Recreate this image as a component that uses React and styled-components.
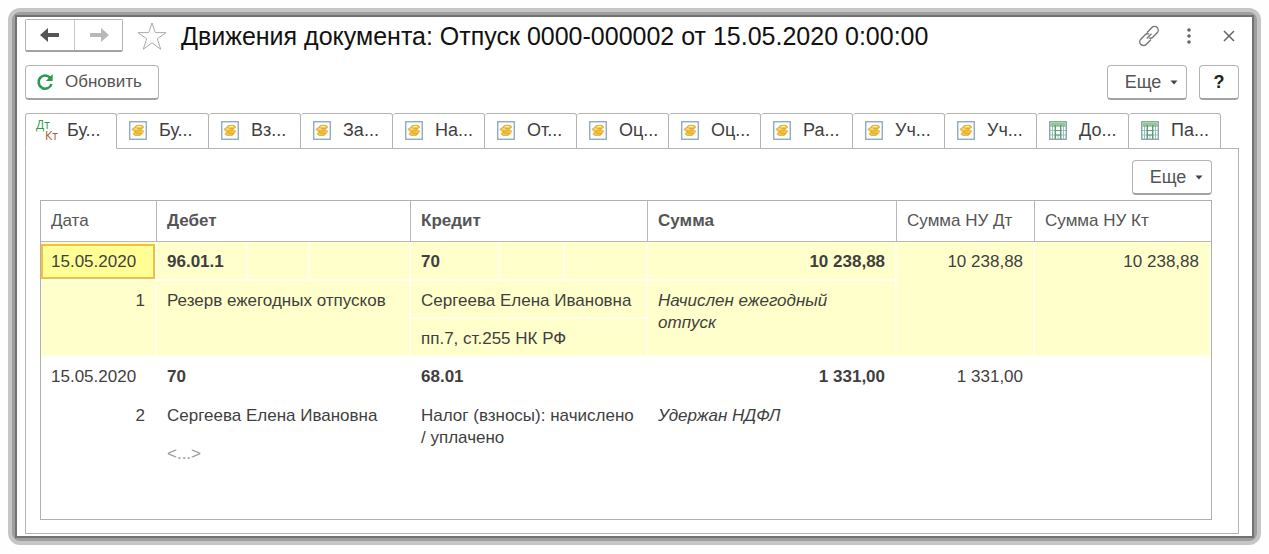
import { useState } from "react";
import styled, { createGlobalStyle, css } from "styled-components";

const GlobalStyle = createGlobalStyle`
  *, *::before, *::after {
    box-sizing: border-box;
  }

  body {
    margin: 0;
    background: #fefefe;
    color: #3f3f3f;
    font: 17px/22px "Liberation Sans", Arial, sans-serif;
  }

  button {
    font: inherit;
    color: inherit;
    margin: 0;
    cursor: pointer;
  }
`;

// Window frame
const Page = styled.div`
  display: flex;
  min-height: 100vh;
  padding: 8px 8px 9px;
`;

const Frame = styled.div`
  display: flex;
  flex: 1;
  min-width: 0;
  padding: 3px;
  border: 4px solid #c6c6c6;
  border-radius: 12px;
  background: #9e9e9e;
`;

const Window = styled.main`
  display: flex;
  flex-direction: column;
  flex: 1;
  min-width: 0;
  padding: 0 13px 2px 8px;
  border: 2px solid #727272;
  background: #fff;
`;

const TitleBar = styled.header`
  display: flex;
  align-items: center;
  height: 37px;
`;

const NavGroup = styled.div`
  display: flex;
  height: 33px;
  border: 1px solid #b4b4b4;
  border-bottom: 2px solid #a2a2a2;
  border-radius: 2px;
`;

const NavButton = styled.button`
  display: flex;
  align-items: center;
  justify-content: center;
  width: 48px;
  padding: 0;
  border: 0;
  background: #fff;

  & + & {
    border-left: 1px solid #c8c8c8;
  }
`;

const IconButton = styled.button`
  display: flex;
  align-items: center;
  justify-content: center;
  width: ${({ $width }) => $width || 24}px;
  padding: 0;
  border: 0;
  background: none;
`;

const Title = styled.h1`
  flex: 1;
  margin: 0;
  color: #111;
  font-size: 25px;
  line-height: 32px;
  font-weight: 400;
  white-space: nowrap;
`;

const WindowTools = styled.div`
  display: flex;
  align-items: center;
  gap: 16px;
  margin-right: -2px;
`;

const Toolbar = styled.div`
  display: flex;
  gap: 12px;
  margin: 11px 0 13px;
`;

const Spacer = styled.div`
  flex: 1;
`;

const Button = styled.button`
  display: flex;
  align-items: center;
  justify-content: center;
  gap: 11px;
  height: 35px;
  padding: 0 16px 0 10px;
  border: 1px solid #b4b4b4;
  border-bottom: 2px solid #a2a2a2;
  border-radius: 4px;
  background: #fff;
  color: #555;
`;

const MenuButton = styled(Button)`
  gap: 9px;
  width: 80px;
  padding: 0 7px 0 16px;
  font-size: 18px;
`;

const HelpButton = styled(Button)`
  width: 40px;
  padding: 0;
  color: #222;
  font-size: 18px;
  font-weight: 700;
`;

// Tabs
const TabList = styled.div`
  display: flex;
`;

const Tab = styled.button`
  display: flex;
  align-items: center;
  gap: ${({ $compact }) => ($compact ? 9 : 12)}px;
  flex: 0 1 92px;
  min-width: 0;
  height: 36px;
  padding: 0 0 2px ${({ $compact }) => ($compact ? 10 : 12)}px;
  border: 1px solid #b4b4b4;
  border-bottom-color: ${({ $active }) => ($active ? "#fff" : "#b4b4b4")};
  border-left-width: ${({ $first }) => ($first ? 1 : 0)}px;
  border-radius: 3px 3px 0 0;
  margin-bottom: -1px;
  background: #fff;
  position: relative;
  font-size: 18px;
  text-align: left;
  white-space: nowrap;
`;

const DtKt = styled.span`
  display: flex;
  flex-direction: column;
  flex: none;
  width: 22px;
  color: #2f9a4d;
  font: 12px/11px "Open Sans", sans-serif;

  span:last-child {
    color: #b5533c;
    align-self: flex-end;
  }
`;

const Panel = styled.section`
  display: flex;
  flex-direction: column;
  flex: 1;
  padding: 11px 26px 13px 14px;
  border: 1px solid #b4b4b4;
`;

const PanelToolbar = styled.div`
  display: flex;
  justify-content: flex-end;
  margin-bottom: 5px;
`;

const Grid = styled.div`
  flex: 1;
  border: 1px solid #b0b0b0;
`;

// Table
const Table = styled.table`
  width: 100%;
  table-layout: fixed;
  border-collapse: separate;
  border-spacing: 0;
`;

const Col = styled.col`
  width: ${({ $width }) => $width}px;
`;

const HeadCell = styled.th`
  height: 41px;
  padding: 0 10px;
  border-right: 1px solid #b8b8b8;
  border-bottom: 1px solid #b8b8b8;
  color: #555;
  font-weight: ${({ $bold }) => ($bold ? 700 : 400)};
  text-align: left;
  white-space: nowrap;

  &:last-child {
    border-right: 0;
  }
`;

const Cell = styled.td`
  height: ${({ $tall }) => ($tall ? 39 : 38)}px;
  padding: 9px 10px 5px;
  border-right: 2px solid transparent;
  border-bottom: 2px solid transparent;
  text-align: ${({ $right }) => ($right ? "right" : "left")};
  vertical-align: top;
  font-weight: ${({ $bold }) => ($bold ? 700 : 400)};
  font-style: ${({ $italic }) => ($italic ? "italic" : "normal")};
  color: ${({ $muted }) => ($muted ? "#999" : "inherit")};
`;

const Record = styled.tbody`
  ${({ $selected }) => $selected && css`
    ${Cell} {
      background: #ffffcb;
      border-color: #ffffeb;
    }
  `}
`;

const CurrentCell = styled(Cell)`
  padding: 2px 0 0;
`;

const Focus = styled.div`
  padding: 5px 8px 4px;
  border: 2px solid #f2bf42;
  background: #ffff96;
`;

const BackIcon = () => (
  <svg width="20" height="16" viewBox="0 0 20 16">
    <path d="M0 8 8 1v5h11v4H8v5z" fill="#555" />
  </svg>
);

const ForwardIcon = () => (
  <svg width="20" height="16" viewBox="0 0 20 16">
    <path d="M20 8 12 1v5H1v4h11v5z" fill="#b8b8b8" />
  </svg>
);

const StarIcon = () => (
  <svg width="30" height="28" viewBox="0 0 30 28" fill="none" stroke="#aaa">
    <path d="M15 1l3.3 9.6H29l-8.7 6.2 3.4 10.4L15 20.8l-8.7 6.4 3.4-10.4L1 10.6h10.7z" />
  </svg>
);

const RefreshIcon = () => (
  <svg width="18" height="18" viewBox="0 0 18 18">
    <path d="M14 4.6A6.6 6.6 0 1 0 15.5 11" fill="none" stroke="#2b9b50" strokeWidth="2.6" />
    <path d="M16.6 1v7H9.8z" fill="#2b9b50" />
  </svg>
);

const LinkIcon = () => (
  <svg width="22" height="22" viewBox="0 0 22 22" fill="none" stroke="#777" strokeWidth="1.4" strokeLinecap="round">
    <path d="M9.3 7.2l4.6-4.6a3.6 3.6 0 0 1 5.3 5.1l-4.4 4.5a3.6 3.6 0 0 1-3.4.9" />
    <path d="M12.6 14.9l-4.5 4.5a3.6 3.6 0 0 1-5.3-5.1l4.4-4.5a3.6 3.6 0 0 1 3.4-.9" />
    <path d="M9.2 13l3.800-3.800" />
  </svg>
);

const DotsIcon = () => (
  <svg width="6" height="16" viewBox="0 0 6 16" fill="#666">
    <circle cx="3" cy="2" r="1.8" />
    <circle cx="3" cy="8" r="1.8" />
    <circle cx="3" cy="14" r="1.8" />
  </svg>
);

const CloseIcon = () => (
  <svg width="12" height="12" viewBox="0 0 12 12" stroke="#666" strokeWidth="1.5">
    <path d="M1 1l10 10M11 1 1 11" />
  </svg>
);

const CaretIcon = () => (
  <svg width="8" height="5" viewBox="0 0 8 5">
    <path d="M.5.5h7L4 4.5z" fill="#444" />
  </svg>
);

const CoinsIcon = () => (
  <svg width="18" height="19" viewBox="0 0 18 19">
    <rect x=".75" y=".75" width="16.5" height="17.5" fill="#fbfdff" stroke="#8aa5b8" strokeWidth="1.3" />
    <g fill="#f7c93f" stroke="#d39a22" strokeWidth=".7">
      <ellipse cx="8.5" cy="12.8" rx="4.3" ry="1.8" />
      <ellipse cx="10.3" cy="10.6" rx="4.3" ry="1.8" />
      <ellipse cx="7.5" cy="8.4" rx="4.3" ry="1.8" />
      <ellipse cx="10.3" cy="6" rx="4.3" ry="1.8" />
    </g>
    <path d="M8 5.6h4M5.5 8h3" stroke="#fff0a8" />
  </svg>
);

const SheetIcon = () => (
  <svg width="18" height="19" viewBox="0 0 18 19">
    <rect x=".75" y=".75" width="16.5" height="17.5" fill="#fff" stroke="#7b9fa8" strokeWidth="1.3" />
    <path d="M1.5 1.5h15v3h-15z" fill="#93c98f" />
    <path d="M1 9.5h16M1 14h16M9 14v4M3.5 5v13M14.5 5v13" stroke="#9dbcb9" />
    <path d="M6.3 4v14M11.7 4v14" stroke="#5b9c78" strokeWidth="1.5" />
    <path d="M1.500 5h15M6 9.500h6M6 14h6" stroke="#5b9c78" />
  </svg>
);

const tabs = [
  { label: "Бу...", icon: "dtkt" },
  { label: "Бу...", icon: "coins" },
  { label: "Вз...", icon: "coins" },
  { label: "За...", icon: "coins" },
  { label: "На...", icon: "coins" },
  { label: "От...", icon: "coins" },
  { label: "Оц...", icon: "coins" },
  { label: "Оц...", icon: "coins" },
  { label: "Ра...", icon: "coins" },
  { label: "Уч...", icon: "coins" },
  { label: "Уч...", icon: "coins" },
  { label: "До...", icon: "sheet" },
  { label: "Па...", icon: "sheet" },
];

const columns = [116, 91, 62, 101, 89, 65, 83, 249, 138];

const TabIcon = ({ type }) => {
  if (type === "dtkt") {
    return <DtKt><span>Дт</span><span>Кт</span></DtKt>;
  }
  return type === "sheet" ? <SheetIcon /> : <CoinsIcon />;
};

const MoreButton = () => (
  <MenuButton type="button" aria-haspopup="menu">Еще <CaretIcon /></MenuButton>
);

const App = () => {
  const [activeTab, setActiveTab] = useState(0);

  return (
    <Page>
      <GlobalStyle />
      <Frame>
        <Window>
          <TitleBar>
            <NavGroup>
              <NavButton type="button" aria-label="Назад"><BackIcon /></NavButton>
              <NavButton type="button" aria-label="Вперед"><ForwardIcon /></NavButton>
            </NavGroup>
            <IconButton type="button" $width={58} aria-label="В избранное"><StarIcon /></IconButton>
            <Title>Движения документа: Отпуск 0000-000002 от 15.05.2020 0:00:00</Title>
            <WindowTools>
              <IconButton type="button" aria-label="Получить ссылку"><LinkIcon /></IconButton>
              <IconButton type="button" aria-label="Меню"><DotsIcon /></IconButton>
              <IconButton type="button" aria-label="Закрыть"><CloseIcon /></IconButton>
            </WindowTools>
          </TitleBar>

          <Toolbar>
            <Button type="button"><RefreshIcon /> Обновить</Button>
            <Spacer />
            <MoreButton />
            <HelpButton type="button">?</HelpButton>
          </Toolbar>

          <TabList role="tablist">
            {tabs.map((tab, i) => (
              <Tab
                key={i}
                type="button"
                role="tab"
                aria-selected={i === activeTab}
                $active={i === activeTab}
                $first={i === 0}
                $compact={tab.icon === "dtkt"}
                onClick={() => setActiveTab(i)}
              >
                <TabIcon type={tab.icon} />
                {tab.label}
              </Tab>
            ))}
          </TabList>

          <Panel>
            <PanelToolbar>
              <MoreButton />
            </PanelToolbar>
            <Grid>
              <Table>
                <colgroup>
                  {columns.map((width, i) => <Col key={i} $width={width} />)}
                  <col />
                </colgroup>
                <thead>
                  <tr>
                    <HeadCell>Дата</HeadCell>
                    <HeadCell colSpan={3} $bold>Дебет</HeadCell>
                    <HeadCell colSpan={3} $bold>Кредит</HeadCell>
                    <HeadCell $bold>Сумма</HeadCell>
                    <HeadCell>Сумма НУ Дт</HeadCell>
                    <HeadCell>Сумма НУ Кт</HeadCell>
                  </tr>
                </thead>
                <Record $selected>
                  <tr>
                    <CurrentCell $tall><Focus>15.05.2020</Focus></CurrentCell>
                    <Cell $bold>96.01.1</Cell>
                    <Cell />
                    <Cell />
                    <Cell $bold>70</Cell>
                    <Cell />
                    <Cell />
                    <Cell $bold $right>10 238,88</Cell>
                    <Cell $right rowSpan={3}>10 238,88</Cell>
                    <Cell $right rowSpan={3}>10 238,88</Cell>
                  </tr>
                  <tr>
                    <Cell $right rowSpan={2}>1</Cell>
                    <Cell colSpan={3} rowSpan={2}>Резерв ежегодных отпусков</Cell>
                    <Cell colSpan={3}>Сергеева Елена Ивановна</Cell>
                    <Cell $italic rowSpan={2}>Начислен ежегодный<br />отпуск</Cell>
                  </tr>
                  <tr>
                    <Cell colSpan={3}>пп.7, ст.255 НК РФ</Cell>
                  </tr>
                </Record>
                <Record>
                  <tr>
                    <Cell $tall>15.05.2020</Cell>
                    <Cell colSpan={3} $bold>70</Cell>
                    <Cell colSpan={3} $bold>68.01</Cell>
                    <Cell $bold $right>1 331,00</Cell>
                    <Cell $right rowSpan={3}>1 331,00</Cell>
                    <Cell rowSpan={3} />
                  </tr>
                  <tr>
                    <Cell $right rowSpan={2}>2</Cell>
                    <Cell colSpan={3}>Сергеева Елена Ивановна</Cell>
                    <Cell colSpan={3} rowSpan={2}>Налог (взносы): начислено<br />/ уплачено</Cell>
                    <Cell $italic rowSpan={2}>Удержан НДФЛ</Cell>
                  </tr>
                  <tr>
                    <Cell colSpan={3} $muted>&lt;...&gt;</Cell>
                  </tr>
                </Record>
              </Table>
            </Grid>
          </Panel>
        </Window>
      </Frame>
    </Page>
  );
};

export default App;
